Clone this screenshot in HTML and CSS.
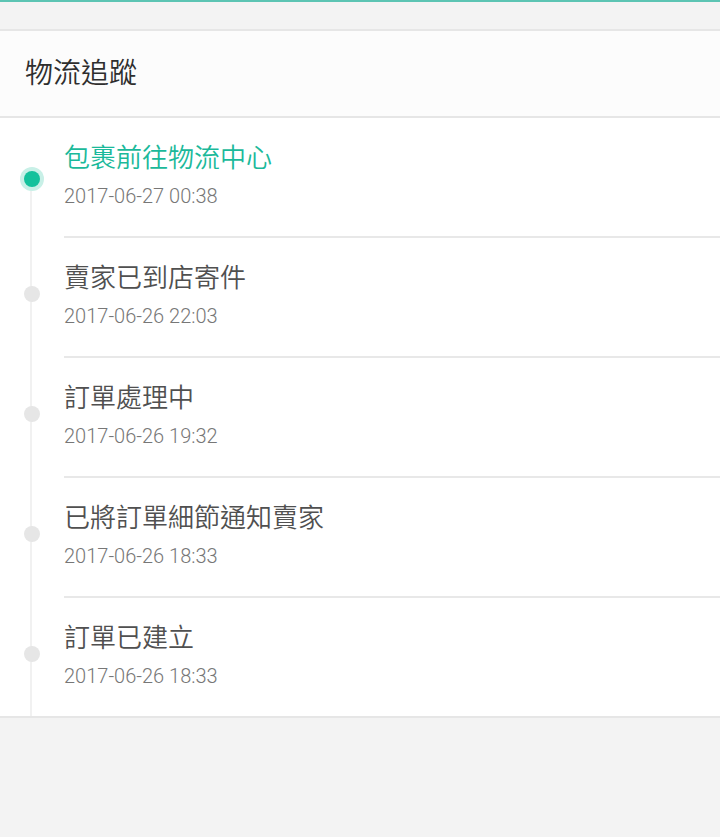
FILE: index.html
```html
<!DOCTYPE html>
<html lang="zh-Hant">

<head>
  <meta charset="UTF-8">
  <meta name="viewport" content="width=device-width, initial-scale=1.0">
  <title>物流追蹤</title>
  <link rel="stylesheet" href="styles.css">
</head>

<body>

  <div class="topGap"></div>

  <div class="header">物流追蹤</div>

  <!-- Timeline -->
  <ul class="timeline">
    <li class="step current">
      <span class="dot"></span>
      <div class="stepTitle">包裹前往物流中心</div>
      <div class="stepTime">2017-06-27 00:38</div>
    </li>
    <li class="step">
      <span class="dot"></span>
      <div class="stepTitle">賣家已到店寄件</div>
      <div class="stepTime">2017-06-26 22:03</div>
    </li>
    <li class="step">
      <span class="dot"></span>
      <div class="stepTitle">訂單處理中</div>
      <div class="stepTime">2017-06-26 19:32</div>
    </li>
    <li class="step">
      <span class="dot"></span>
      <div class="stepTitle">已將訂單細節通知賣家</div>
      <div class="stepTime">2017-06-26 18:33</div>
    </li>
    <li class="step">
      <span class="dot"></span>
      <div class="stepTitle">訂單已建立</div>
      <div class="stepTime">2017-06-26 18:33</div>
    </li>
  </ul>

</body>

</html>
```

FILE: styles.css
```css
body {
  font-family: Roboto, "Noto Sans CJK TC", sans-serif;
  background-color: #f3f3f3;
  border-top: 2px solid #5cc4b3;
  margin: 0;
  padding: 0;
}

.topGap {
  height: 27px;
}

.header {
  height: 89px;
  box-sizing: border-box;
  padding-left: 25px;
  padding-bottom: 6px;
  display: flex;
  align-items: center;
  font-family: "Noto Sans CJK TC", sans-serif;
  font-size: 28px;
  font-weight: 350;
  color: #2e2e2e;
  background-color: #fcfcfc;
  border-top: 2px solid #e6e6e6;
  border-bottom: 2px solid #e6e6e6;
}

.timeline {
  list-style: none;
  margin: 0;
  padding: 0 0 0 64px;
  background-color: #fff;
  border-bottom: 2px solid #e6e6e6;
  position: relative;
}

.timeline::before {
  content: "";
  position: absolute;
  left: 30px;
  top: 60px;
  bottom: 0;
  width: 2px;
  background-color: #f1f1f1;
}

.step {
  position: relative;
  padding: 20px 0 26px;
  border-bottom: 2px solid #e8e8e8;
}

.step:last-child {
  border-bottom: none;
}

.dot {
  position: absolute;
  left: -40px;
  top: 48px;
  width: 16px;
  height: 16px;
  border-radius: 50%;
  background-color: #e6e6e6;
}

.current .dot {
  top: 53px;
  background-color: #14c19c;
  box-shadow: 0 0 0 4px #c8f0e7;
}

.stepTitle {
  font-family: "Noto Sans CJK TC", sans-serif;
  font-size: 26px;
  font-weight: 350;
  line-height: 36px;
  color: #505050;
}

.current .stepTitle {
  color: #1bb99a;
}

.stepTime {
  margin-top: 8px;
  font-size: 20px;
  font-weight: 300;
  line-height: 28px;
  color: #777;
}
```
